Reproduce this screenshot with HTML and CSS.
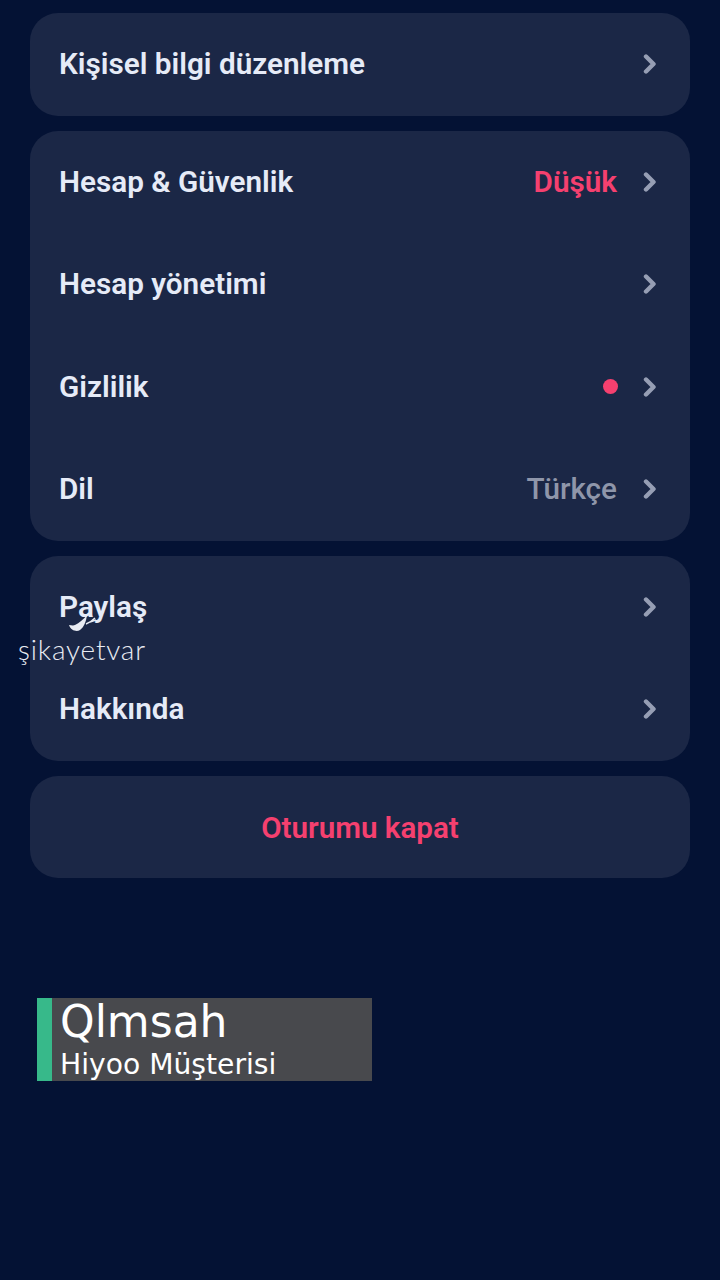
FILE: index.html
```html
<!DOCTYPE html>
<html lang="tr">
<head>
    <meta charset="UTF-8">
    <title>Ayarlar</title>
    <link rel="stylesheet" href="styles.css">
</head>
<body>

<div class="card">
    <div class="row">
        <span class="label">Kişisel bilgi düzenleme</span>
        <svg class="chevron" viewBox="0 0 14 22"><path d="M3 3.5l7.5 7.5-7.5 7.5"/></svg>
    </div>
</div>

<div class="card">
    <div class="row">
        <span class="label">Hesap &amp; Güvenlik</span>
        <span class="value value-alert">Düşük</span>
        <svg class="chevron" viewBox="0 0 14 22"><path d="M3 3.5l7.5 7.5-7.5 7.5"/></svg>
    </div>
    <div class="row">
        <span class="label">Hesap yönetimi</span>
        <svg class="chevron" viewBox="0 0 14 22"><path d="M3 3.5l7.5 7.5-7.5 7.5"/></svg>
    </div>
    <div class="row">
        <span class="label">Gizlilik</span>
        <span class="dot"></span>
        <svg class="chevron" viewBox="0 0 14 22"><path d="M3 3.5l7.5 7.5-7.5 7.5"/></svg>
    </div>
    <div class="row">
        <span class="label">Dil</span>
        <span class="value">Türkçe</span>
        <svg class="chevron" viewBox="0 0 14 22"><path d="M3 3.5l7.5 7.5-7.5 7.5"/></svg>
    </div>
</div>

<div class="card">
    <div class="row">
        <span class="label">Paylaş</span>
        <svg class="chevron" viewBox="0 0 14 22"><path d="M3 3.5l7.5 7.5-7.5 7.5"/></svg>
    </div>
    <div class="row">
        <span class="label">Hakkında</span>
        <svg class="chevron" viewBox="0 0 14 22"><path d="M3 3.5l7.5 7.5-7.5 7.5"/></svg>
    </div>
</div>

<div class="card">
    <div class="row row-center">
        <span class="logout">Oturumu kapat</span>
    </div>
</div>

<div class="caption">
    <div class="caption-name">Qlmsah</div>
    <div class="caption-role">Hiyoo Müşterisi</div>
</div>

<div class="watermark">
    <svg class="watermark-mark" viewBox="0 0 40 24">
        <path class="mark-fill" d="M3 15c2 0 4 1 6 0 4-2 9-6 12-10-1 7-3 12-7 15-3 2-9 1-11-5z"/>
        <path class="mark-line" d="M20 14c3-1 6-3 9-6M24 12l6-2"/>
    </svg>
    <div class="watermark-text">şikayetvar</div>
</div>

</body>
</html>
```

FILE: styles.css
```css
html, body {
    height: 100%;
}

body {
    margin: 0;
    padding: 13px 30px 0;
    box-sizing: border-box;
    background: #041234;
    font-family: Roboto, "Noto Sans", sans-serif;
    overflow: hidden;
    position: relative;
}

.card {
    background: #1b2746;
    border-radius: 28px;
    margin-bottom: 15px;
}

.row {
    height: 102.5px;
    display: flex;
    align-items: center;
    padding: 0 33px 0 29px;
}

.row-center {
    justify-content: center;
    padding: 0;
}

.label {
    flex: 1;
    font-size: 29.7px;
    font-weight: 600;
    color: #e6ebf7;
    margin-top: -1px;
}

.value {
    font-size: 29.7px;
    font-weight: 500;
    color: #8f96aa;
    margin: -1px 26px 0 0;
}

.value-alert {
    font-weight: 600;
    color: #f5406f;
}

.dot {
    width: 15px;
    height: 15px;
    border-radius: 50%;
    background: #f5406f;
    margin-right: 25px;
}

.chevron {
    width: 14px;
    height: 22px;
    fill: none;
    stroke: #969eb4;
    stroke-width: 4.4;
    stroke-linecap: round;
    stroke-linejoin: round;
}

.logout {
    font-size: 29.6px;
    font-weight: 600;
    color: #f5406f;
    margin-top: 2px;
}

/* lower third */
.caption {
    width: 335px;
    height: 83px;
    margin: 120px 0 0 7px;
    box-sizing: border-box;
    padding-left: 8px;
    border-left: 15px solid #37b98a;
    background: #48494d;
    color: #fff;
    font-family: "DejaVu Sans", sans-serif;
}

.caption-name {
    font-size: 44px;
    line-height: 48px;
}

.caption-role {
    font-size: 28.2px;
    line-height: 38px;
}

.watermark {
    position: absolute;
    left: 17px;
    top: 610px;
    width: 130px;
    text-align: center;
    color: #e8ebf2;
}

.watermark-mark {
    display: block;
    width: 40px;
    height: 24px;
    margin-left: 49px;
}

.mark-fill {
    fill: #e8ebf2;
}

.mark-line {
    fill: none;
    stroke: #e8ebf2;
    stroke-width: 1.5;
}

.watermark-text {
    font-family: Lato, sans-serif;
    font-weight: 300;
    font-size: 28px;
    letter-spacing: 0.8px;
    line-height: 30px;
}
```
